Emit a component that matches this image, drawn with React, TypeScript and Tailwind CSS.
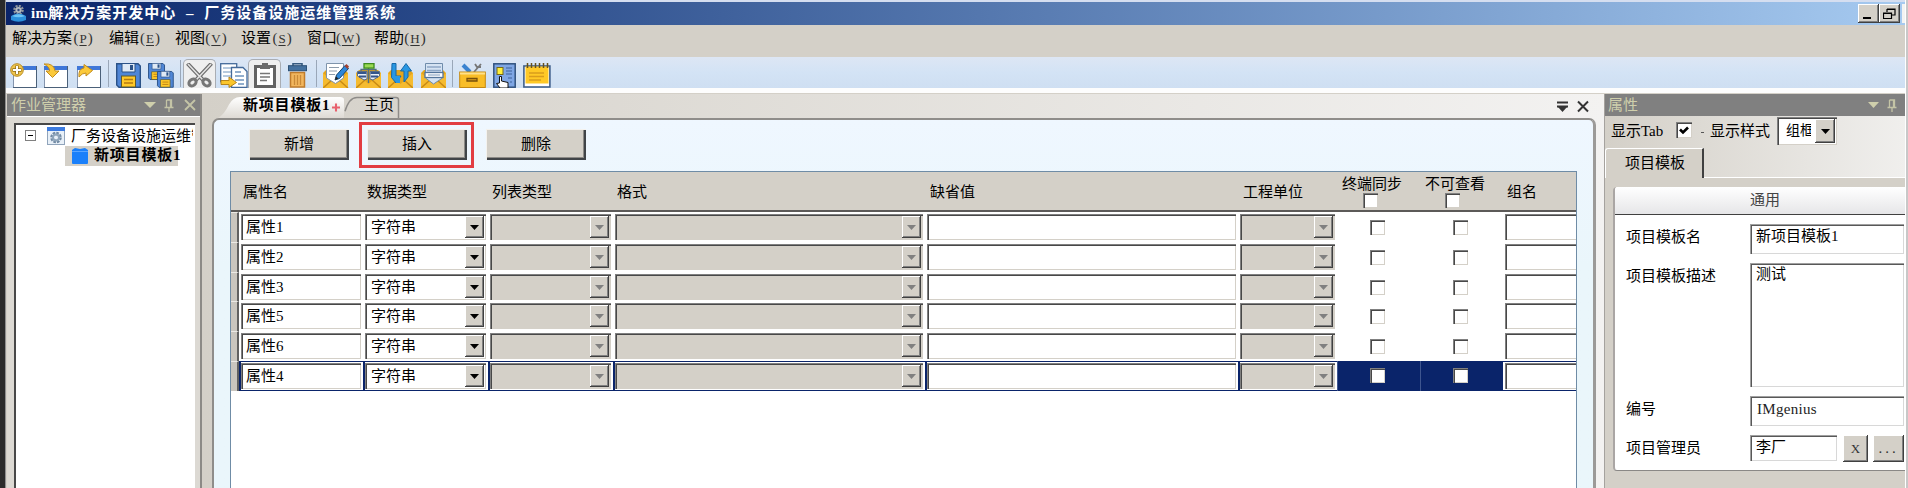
import React from "react";

const FIELD =
  "shadow-[inset_1px_1px_0_#808080,inset_2px_2px_0_#484848,inset_-1px_-1px_0_#d4d0c8]";
const RAISED =
  "bg-[#d4d0c8] shadow-[inset_-1px_-1px_0_#404040,inset_1px_1px_0_#ffffff,inset_-2px_-2px_0_#808080]";

function Icon({ w, h = 25, className = "", children }: { w: number; h?: number; className?: string; children: React.ReactNode }) {
  return (
    <svg width={w} height={h} viewBox={`0 0 ${w} ${h}`} className={`shrink-0 ${className}`}>
      {children}
    </svg>
  );
}

function Arrow({ color = "#000" }: { color?: string }) {
  return (
    <svg width="9" height="5" viewBox="0 0 9 5" className="shrink-0">
      <path d="M0 0H9L4.5 5Z" fill={color} />
    </svg>
  );
}

function Pin() {
  return (
    <svg width="10" height="13" viewBox="0 0 10 13" className="shrink-0">
      <path d="M2.5 1H7.5V8M2.5 1V8M0.5 8.5H9.5M5 8.5V13M6.5 1V8" fill="none" stroke="#c4c4a6" strokeWidth="1.3" />
    </svg>
  );
}

function TitleBar() {
  return (
    <header className="flex h-[23px] shrink-0 items-center bg-linear-to-r from-[#0a246a] to-[#a6caf0] pl-[5px]">
      <Icon w={15} h={17}>
        <circle cx="7.5" cy="5" r="4" fill="none" stroke="#8f969c" strokeWidth="2.6" strokeDasharray="2 1.1" />
        <circle cx="7.5" cy="5" r="3" fill="#b4bac0" />
        <circle cx="7.5" cy="5" r="1.2" fill="#324a7e" />
        <path d="M0 11Q7.500 6 15 11V15Q7.500 18.500 0 15Z" fill="#2b8fdc" />
        <path d="M1 11Q7.500 7.500 14 11Q7.500 13.500 1 11Z" fill="#6ec4f5" />
      </Icon>
      <h1 className="ml-[5px] text-[15px] leading-[23px] font-bold tracking-[1px] whitespace-pre text-white">
        <span className="tracking-[0.3px]">im</span>解决方案开发中心
        <span className="inline-block w-[28px] text-center">–</span>厂务设备设施运维管理系统
      </h1>
      <div className="ml-auto flex h-[19px]">
        <span className={`flex w-[21px] items-end pb-[4px] pl-[5px] ${RAISED}`}>
          <span className="h-[2px] w-[8px] bg-black" />
        </span>
        <span className={`flex w-[21px] items-center justify-center ${RAISED}`}>
          <svg width="13" height="12" viewBox="0 0 13 12">
            <path d="M4 1H12V7H9M4 1V4M0.500 5H8.500V10.500H0.500ZM4 1.500H12M0.500 5.500H8.500" fill="none" stroke="#000" strokeWidth="1.200" />
          </svg>
        </span>
        <span className="ml-[2px] w-[3px] bg-[#f4f4f2]" />
      </div>
    </header>
  );
}

const menus = [
  { label: "解决方案", key: "P", w: "w-[97px]" },
  { label: "编辑", key: "E", w: "w-[66px]" },
  { label: "视图", key: "V", w: "w-[66px]" },
  { label: "设置", key: "S", w: "w-[66px]" },
  { label: "窗口", key: "W", w: "w-[67px]" },
  { label: "帮助", key: "H", w: "w-[67px]" },
];

function MenuBar() {
  return (
    <nav className="flex h-[32px] shrink-0 bg-[#d4d0c8] pt-[2px] pl-[6px]">
      {menus.map((m) => (
        <span key={m.key} className={`flex h-[23px] items-center leading-[23px] ${m.w}`}>
          {m.label}
          <span className="flex w-[22px] items-center justify-center text-[#333]">
            (<u className="mx-px text-[13px] underline-offset-2">{m.key}</u>)
          </span>
        </span>
      ))}
    </nav>
  );
}

function Win() {
  return (
    <>
      <rect x="3.500" y="3.500" width="23" height="21" fill="#fff" stroke="#8494ad" />
      <rect x="3" y="3" width="24" height="4" fill="#3f77d8" />
      <path d="M26.500 3V24.500H3" fill="none" stroke="#4a6079" />
    </>
  );
}

function Floppy() {
  return (
    <>
      <path d="M0.700 0.700H22L24.300 3V24.300H3L0.700 22Z" fill="#4f86d6" stroke="#2b5287" strokeWidth="1.400" />
      <path d="M6 0.500H19V9H6Z" fill="#dfe9f5" stroke="#2b5287" />
      <rect x="14" y="2" width="3" height="5" fill="#2b5287" />
      <rect x="5.500" y="13" width="14" height="11" fill="#ffc928" stroke="#5f5b2c" />
      <path d="M8 16.500H17M8 20H17" stroke="#b47a12" strokeWidth="1.300" />
    </>
  );
}

function Envelope() {
  return (
    <>
      <path d="M0 10L3 7H22L25 10V25H0Z" fill="#e5a51c" />
      <path d="M0 10L12.500 21L25 10V25H0Z" fill="#f5bb30" />
      <path d="M0 25L9 17M25 25L16 17" stroke="#c98b14" strokeWidth="1.500" />
    </>
  );
}

function Sep({ className }: { className: string }) {
  return <span className={`mb-px h-[27px] w-px shrink-0 bg-[#9aa7b8] ${className}`} />;
}

function Toolbar() {
  return (
    <div className="flex h-[31px] shrink-0 items-end bg-linear-to-b from-[#dde6f4] via-[#d3e3f5] to-[#cfdff2]">
      <Icon w={28} className="ml-[4px]">
        <Win />
        <circle cx="7" cy="7" r="6.300" fill="#f0c64c" stroke="#b88b25" />
        <path d="M7 2.500V11.500M2.500 7H11.500" stroke="#8c6a1c" strokeWidth="3.400" />
        <path d="M7 3V11M3 7H11" stroke="#fff" strokeWidth="2" />
      </Icon>
      <Icon w={28} className="ml-[3px]">
        <Win />
        <path d="M3 1Q13 0 14 8H18L11.500 14.500L5 8H8.500Q9 4 3 1Z" fill="#fbc93a" stroke="#c28c1c" />
      </Icon>
      <Icon w={28} className="ml-[5px]">
        <Win />
        <path d="M5 14Q4 6 10 5V1.500L18.500 7.500L12 13V10Q8 10 5 14Z" fill="#fbc93a" stroke="#c28c1c" />
      </Icon>
      <Sep className="ml-[6px]" />
      <Icon w={25} className="ml-[7px]">
        <Floppy />
      </Icon>
      <Icon w={26} className="ml-[7px]">
        <g transform="scale(.68)">
          <Floppy />
        </g>
        <g transform="translate(9 8) scale(.67)">
          <Floppy />
        </g>
      </Icon>
      <Sep className="ml-[6px]" />
      <span className="ml-[2px] flex h-[29px] w-[33px] shrink-0 items-end justify-center rounded-t-[5px] border border-b-0 border-[#a9adb3] bg-[#efefef]">
        <Icon w={27}>
          <path d="M1.500 0.500L18 18M25.500 0.500L9 18" stroke="#6d6d6d" strokeWidth="4" />
          <path d="M2 1L17 17M25 1L10 17" stroke="#e4e4e4" strokeWidth="1.600" />
          <ellipse cx="6.500" cy="19.500" rx="4" ry="3" transform="rotate(-40 6.500 19.500)" fill="#eee" stroke="#777" strokeWidth="3" />
          <ellipse cx="20.500" cy="19.500" rx="4" ry="3" transform="rotate(40 20.500 19.500)" fill="#eee" stroke="#777" strokeWidth="3" />
        </Icon>
      </span>
      <Icon w={28} className="ml-[4px]">
        <rect x="0.700" y="0.700" width="16" height="18" fill="#fff" stroke="#446a9a" strokeWidth="1.300" />
        <path d="M3 5H11M3 9H11M3 13H11" stroke="#6f94bd" />
        <path d="M11.500 4.500H23L27 8.500V24.300H11.500Z" fill="#fff" stroke="#446a9a" strokeWidth="1.300" />
        <path d="M15 9H21M15 13H24M15 17H24M18 21H24" stroke="#6f94bd" strokeWidth="1.300" />
        <path d="M1 17.500H9V14L16.500 19.500L9 24.500V21.500H1Z" fill="#fbc62c" stroke="#b98518" />
      </Icon>
      <span className="flex h-[29px] w-[33px] shrink-0 items-end justify-center rounded-t-[5px] border border-b-0 border-[#a9adb3] bg-[#efefef]">
        <Icon w={22}>
          <rect x="1.500" y="3.500" width="19" height="20" fill="#fff" stroke="#636363" strokeWidth="3" />
          <path d="M6 2H8V0H14V2H16V6H6Z" fill="#6b6b6b" />
          <path d="M6 10.500H16M6 14H16M6 17.500H13" stroke="#777" strokeWidth="1.600" />
        </Icon>
      </span>
      <Icon w={19} className="ml-[7px]">
        <path d="M5 3V0.700H14V3" fill="none" stroke="#365a80" strokeWidth="1.600" />
        <rect x="0.500" y="2.700" width="18" height="5" fill="#44719f" stroke="#2e5378" />
        <path d="M2.500 9.500H16.500V24H2.500Z" fill="#f2b65e" stroke="#c07c2c" strokeWidth="1.500" />
        <path d="M6.500 12V22M9.500 12V22M12.500 12V22" stroke="#c98a38" strokeWidth="1.300" />
      </Icon>
      <Sep className="ml-[9px]" />
      <Icon w={26} className="ml-[6px]">
        <Envelope />
        <path d="M3.500 0.500H20.500V15L12.500 20.500L3.500 15Z" fill="#fff" stroke="#7f94ab" />
        <path d="M6 4.500H16M6 8H14M6 11.500H12" stroke="#8c9bab" />
        <path d="M12 17L13.500 12L22 2.500L25.500 5.500L16.500 15.500Z" fill="#2e86d8" stroke="#17466f" />
        <path d="M21.500 3L23.500 1L26 3.500L24.500 6Z" fill="#a04030" />
        <path d="M12 17L13 13.500L15.500 15.500Z" fill="#222" />
      </Icon>
      <Icon w={25} className="ml-[7px]">
        <Envelope />
        <path d="M12.500 4V20M5 9V6.500H20V9" fill="none" stroke="#54707f" strokeWidth="1.300" />
        <rect x="8" y="0.600" width="10" height="4.500" fill="#9ada54" stroke="#3c8a1c" strokeWidth="1.300" />
        <path d="M1.500 8.500H11V16L8 17L1.500 13Z" fill="#e9eff6" stroke="#5a6d85" />
        <path d="M14 8.500H23.500V13L17 17L14 16Z" fill="#e9eff6" stroke="#5a6d85" />
        <path d="M2 10H10.500M3 13.500H10M14.500 10H23M15 13.500H22" stroke="#34558c" strokeWidth="2" />
      </Icon>
      <Icon w={25} className="ml-[7px]">
        <Envelope />
        <path d="M4 0.500H8V13H13L8 20L3.500 14.500Z" fill="#2a97e2" stroke="#1668a8" />
        <path d="M8 13H12V20H8Z" fill="#2a97e2" />
        <path d="M16 19V8H12.500L18 0.500L23.500 8H20V14Z" fill="#2a97e2" stroke="#1668a8" />
      </Icon>
      <Icon w={25} className="ml-[8px]">
        <Envelope />
        <path d="M4.500 0.500H21.500V15L12.500 21L4.500 15Z" fill="#d5e3f3" stroke="#6f8cab" />
        <path d="M6 4H20M6 7.500H20" stroke="#8ea8c7" strokeWidth="1.400" />
        <rect x="4" y="9.500" width="18" height="5" fill="#fff" stroke="#54759b" strokeWidth="1.300" />
        <path d="M7 12H19" stroke="#7b98ba" />
      </Icon>
      <Sep className="ml-[6px]" />
      <Icon w={27} className="ml-[6px]">
        <path d="M4 2L11 9" stroke="#3b83cf" strokeWidth="4" />
        <path d="M22 1L15 9M16 1L18 4L22 4" fill="none" stroke="#777" strokeWidth="1.800" />
        <rect x="0.700" y="9" width="25.600" height="15.500" fill="#f9bd27" stroke="#c48912" />
        <path d="M1 10.500H26" stroke="#ffe08a" strokeWidth="2" />
        <path d="M8 15.500H18V18H8Z" fill="#e0a01c" stroke="#77500b" strokeWidth="1.300" />
      </Icon>
      <Icon w={23} className="ml-[7px]">
        <rect x="0.800" y="0.800" width="21.400" height="23.400" fill="#7fa6e4" stroke="#31527f" strokeWidth="1.500" />
        <rect x="4" y="4.500" width="6" height="7" fill="#ffef3a" stroke="#776a1a" />
        <path d="M13 5H19M13 8H19M13 11H19M15 15H19M17 19H19" stroke="#3f6399" strokeWidth="1.200" />
        <path d="M6.500 13.500H8.500V18L15 19.500V25H7L3.500 20.500L6.500 20Z" fill="#fff" stroke="#111" />
      </Icon>
      <Icon w={28} className="ml-[7px]">
        <rect x="0.900" y="3" width="26" height="21" fill="#fff" stroke="#3f5f8a" strokeWidth="1.600" />
        <rect x="2.500" y="3.500" width="23" height="17" fill="#ffc926" />
        <path d="M4.500 0V5M8.500 0V5M12.500 0V5M16.500 0V5M20.500 0V5M24.500 0V5" stroke="#66501c" strokeWidth="1.500" />
        <path d="M6 10H21M6 13.500H21M6 17H18" stroke="#d99d1c" strokeWidth="1.300" />
      </Icon>
    </div>
  );
}

function JobPanel() {
  return (
    <aside className="flex w-[196px] shrink-0 flex-col border-r-2 border-r-[#8c8a86] pl-px">
      <div className="flex h-[22px] shrink-0 items-center bg-[#808080] pl-[4px] text-[#cfcfac]">
        <span className="w-[133px] leading-[22px]">作业管理器</span>
        <svg width="12" height="6" viewBox="0 0 12 6"><path d="M0 0H12L6 6Z" fill="#cfcfac" /></svg>
        <span className="ml-[8px] flex"><Pin /></span>
        <svg width="12" height="12" viewBox="0 0 12 12" className="ml-[10px]">
          <path d="M1 1L11 11M11 1L1 11" stroke="#c4c4a6" strokeWidth="1.800" />
        </svg>
      </div>
      <div className="flex flex-1 border-t border-t-white bg-[#dcd9d3] pt-[6px] pr-[5px] pl-[7px]">
        <div className="flex flex-1 flex-col overflow-hidden border-t-2 border-l-2 border-t-[#484848] border-l-[#484848] bg-white">
          <div className="flex h-[21px] shrink-0 items-center pl-[9px]">
            <span className="flex size-[11px] shrink-0 items-center justify-center border border-[#808080]">
              <span className="h-px w-[5px] bg-black" />
            </span>
            <svg width="18" height="18" viewBox="0 0 18 18" className="ml-[11px] shrink-0">
              <rect x="0.500" y="0.500" width="17" height="17" fill="#e8f0f8" stroke="#90a4bb" />
              <rect width="18" height="4" fill="#3c7be0" />
              <circle cx="9" cy="10.500" r="4" fill="none" stroke="#7089a3" strokeWidth="3.600" strokeDasharray="2.200 0.900" />
              <circle cx="9" cy="10.500" r="3" fill="none" stroke="#8fa5ba" strokeWidth="2" />
            </svg>
            <span className="ml-[6px] w-[122px] shrink-0 overflow-hidden leading-[20px] whitespace-nowrap">
              厂务设备设施运维管理系统
            </span>
          </div>
          <div className="ml-[49px] flex h-[20px] w-[113px] shrink-0 items-center bg-[#d4d0c8] pl-[7px]">
            <svg width="16" height="16" viewBox="0 0 16 16" className="shrink-0">
              <path d="M0 2L3 0L8 1L13 0L16 2V15Q16 16 15 16H1Q0 16 0 15Z" fill="#1b80fa" />
              <path d="M0 3.500H16" stroke="#5ba6ff" />
            </svg>
            <span className="ml-[6px] pb-[3px] leading-[18px] font-bold tracking-[0.8px] whitespace-nowrap">新项目模板1</span>
          </div>
        </div>
      </div>
    </aside>
  );
}

function PushButton({ label, className = "" }: { label: string; className?: string }) {
  return (
    <button className={`h-[31px] w-[100px] bg-[#d4d0c8] pb-[2px] leading-[28px] shadow-[inset_1px_1px_0_#f4f2ee,inset_-2px_-2px_0_#404448,inset_-3px_-3px_0_#8c8a86] ${className}`}>
      {label}
    </button>
  );
}

function Combo({ text = "", disabled = false }: { text?: string; disabled?: boolean }) {
  return (
    <div className={`mx-[2px] flex h-[26px] flex-1 items-center p-[2px] pl-[6px] ${FIELD} ${disabled ? "bg-[#d4d0c8]" : "bg-white"}`}>
      <span className="flex-1 leading-[20px]">{text}</span>
      <span className={`flex h-[22px] w-[19px] items-center justify-center ${RAISED}`}>
        <Arrow color={disabled ? "#808080" : "#000"} />
      </span>
    </div>
  );
}

function TextField({ text = "", className = "mx-[2px]" }: { text?: string; className?: string }) {
  return <div className={`flex h-[26px] flex-1 items-center bg-white pb-px pl-[5px] leading-[20px] ${FIELD} ${className}`}>{text}</div>;
}

function Check({ className = "" }: { className?: string }) {
  return <span className={`size-[15px] shrink-0 bg-white ${FIELD} ${className}`} />;
}

const COLS = "grid grid-cols-[124px_125px_125px_312px_313px_99px_83px_83px_73px]";
const rows = [
  { name: "属性1", h: "h-[30px]" },
  { name: "属性2", h: "h-[30px]" },
  { name: "属性3", h: "h-[29px]" },
  { name: "属性5", h: "h-[30px]" },
  { name: "属性6", h: "h-[30px]" },
  { name: "属性4", h: "h-[30px]", selected: true },
];

function DataRow({ name, h, selected = false }: { name: string; h: string; selected?: boolean }) {
  const cell = selected
    ? "flex border-y border-l-2 border-[#0a246a] pt-px"
    : "flex pt-[2px]";
  const inner = selected ? "-ml-[2px] flex flex-1" : "flex flex-1";
  const checkCell = selected
    ? "flex justify-center border-l border-[#3f568f] bg-[#0a246a] pt-[7px]"
    : "flex justify-center pt-[8px]";
  return (
    <div className={`flex ${h}`}>
      <span className="w-[8px] shrink-0 border-t border-r-2 border-t-[#eceae6] border-r-[#606060] bg-[#c9c5be]" />
      <div className={COLS}>
        <div className={cell}><div className={inner}><TextField text={name} /></div></div>
        <div className={cell}><div className={inner}><Combo text="字符串" /></div></div>
        <div className={cell}><div className={inner}><Combo disabled /></div></div>
        <div className={cell}><div className={inner}><Combo disabled /></div></div>
        <div className={cell}><div className={inner}><TextField /></div></div>
        <div className={cell}><div className={inner}><Combo disabled /></div></div>
        <div className={checkCell}><Check className="-ml-[3px]" /></div>
        <div className={checkCell}><Check className="-ml-[3px]" /></div>
        <div className={selected ? "flex border-y border-[#0a246a] pt-px" : "flex pt-[2px]"}>
          <TextField className="ml-[2px] -mr-[2px]" />
        </div>
      </div>
    </div>
  );
}

function DataTable() {
  return (
    <div className="ml-[16px] flex w-[1347px] flex-1 flex-col overflow-hidden border border-b-0 border-[#6f8ca6] bg-white">
      <div className="flex h-[40px] shrink-0 border-b-2 border-b-[#5c5a58] bg-[#d4d0c8] pl-[8px]">
        <div className={COLS}>
          <span className="pl-[4px] leading-[41px]">属性名</span>
          <span className="pl-[4px] leading-[41px]">数据类型</span>
          <span className="pl-[4px] leading-[41px]">列表类型</span>
          <span className="pl-[4px] leading-[41px]">格式</span>
          <span className="pl-[5px] leading-[41px]">缺省值</span>
          <span className="pl-[5px] leading-[41px]">工程单位</span>
          <div className="flex flex-col pt-[3px] pl-[5px]">
            <span className="h-[18px] leading-[19px]">终端同步</span>
            <Check className="ml-[21px]" />
          </div>
          <div className="flex flex-col pt-[3px] pl-[5px]">
            <span className="h-[18px] leading-[19px]">不可查看</span>
            <Check className="ml-[20px]" />
          </div>
          <span className="pl-[4px] leading-[41px]">组名</span>
        </div>
      </div>
      {rows.map((r) => (
        <DataRow key={r.name} {...r} />
      ))}
    </div>
  );
}

function Editor() {
  return (
    <main className="flex min-w-0 flex-1 flex-col bg-linear-to-r from-[#d4d0c8] to-[#f3f2f1] pl-[10px]">
      <div className="flex h-[24px] shrink-0 items-end">
        <div className="relative ml-[6px] flex h-[22px] w-[126px]">
          <svg width="126" height="22" viewBox="0 0 126 23" preserveAspectRatio="none" className="absolute inset-0">
            <defs>
              <linearGradient id="tab" x1="0" y1="0" x2="0" y2="1">
                <stop offset="0" stopColor="#ffffff" />
                <stop offset="1" stopColor="#dedad4" />
              </linearGradient>
            </defs>
            <path d="M0 23Q6 20 11 9Q15 1 22 1H122Q126 1 126 4V23Z" fill="url(#tab)" />
          </svg>
          <span className="relative ml-[25px] leading-[19px] font-bold tracking-[0.8px] whitespace-nowrap">新项目模板1</span>
          <svg width="8" height="9" viewBox="0 0 10 10" className="relative mt-[7px] ml-[2px]">
            <path d="M5 0V10M0 5H10" stroke="#e8606c" strokeWidth="2.600" />
          </svg>
        </div>
        <div className="relative flex h-[22px] w-[56px]">
          <svg width="56" height="22" viewBox="0 0 56 23" preserveAspectRatio="none" className="absolute inset-0">
            <path d="M1 16Q5 1.500 13 1.500H52Q54.500 1.500 54.500 4V23" fill="none" stroke="#8e8c89" strokeWidth="1.500" />
          </svg>
          <span className="relative ml-[20px] leading-[19px]">主页</span>
        </div>
        <svg width="34" height="13" viewBox="0 0 34 13" className="mr-[14px] mb-[5px] ml-auto">
          <path d="M1 2.500H12M1 6.500H12" stroke="#333" strokeWidth="2" />
          <path d="M2 7H11L6.500 12Z" fill="#333" />
          <path d="M22 1.500L32 11.500M32 1.500L22 11.500" stroke="#333" strokeWidth="2" />
        </svg>
      </div>
      <div className="mr-[8px] flex flex-1 flex-col rounded-t-[7px] border-t-2 border-r-3 border-l-2 border-t-[#8f8d8a] border-r-[#9c9a98] border-l-[#8f8d8a] bg-linear-to-b from-[#eff7ff] to-[#eaf6fb] to-40%">
        <div className="flex h-[51px] shrink-0 items-start pt-[2px] pl-[35px]">
          <PushButton label="新增" className="mt-[7px]" />
          <span className="ml-[10px] flex h-[46px] w-[115px] items-start border-3 border-[#e23d42] pt-[4px] pl-[5px]">
            <PushButton label="插入" />
          </span>
          <PushButton label="删除" className="mt-[7px] ml-[12px]" />
        </div>
        <DataTable />
      </div>
    </main>
  );
}

const BOX = "shadow-[inset_1px_1px_0_#a0a0a0,inset_2px_2px_0_#585858,inset_-1px_-1px_0_#d8d8d8]";

function Properties() {
  return (
    <aside className="flex w-[301px] shrink-0 flex-col overflow-hidden border-l border-l-[#a5a29e] bg-[#d4d0c8]">
      <div className="flex h-[22px] shrink-0 items-center bg-[#808080] pl-[3px] text-[#cfcfac]">
        <span className="w-[260px] leading-[22px]">属性</span>
        <svg width="11" height="6" viewBox="0 0 11 6"><path d="M0 0H11L5.500 6Z" fill="#cfcfac" /></svg>
        <span className="ml-[8px] flex"><Pin /></span>
      </div>
      <div className="flex h-[62px] shrink-0 flex-col bg-linear-to-r from-[#d4d0c8] to-[#f0efed]">
        <div className="flex h-[32px] items-center pl-[6px]">
          <span className="w-[65px] pb-[3px] leading-[22px]">显示Tab</span>
          <span className={`mb-[4px] flex size-[16px] items-center justify-center bg-white ${FIELD}`}>
            <svg width="10" height="9" viewBox="0 0 10 9">
              <path d="M1 3.500L4 6.500L9 1.500" fill="none" stroke="#000" strokeWidth="2.600" />
            </svg>
          </span>
          <span className="ml-[9px] h-px w-[3px] bg-[#555]" />
          <span className="ml-[6px] w-[67px] pb-[3px] leading-[22px]">显示样式</span>
          <div className={`mt-[-2px] flex h-[28px] w-[60px] items-center bg-white p-[2px] pl-[9px] ${FIELD}`}>
            <span className="w-[25px] overflow-hidden text-[14px] leading-[20px] whitespace-nowrap">组框</span>
            <span className={`ml-auto flex h-[24px] w-[20px] items-center justify-center ${RAISED}`}><Arrow /></span>
          </div>
        </div>
        <div className="flex flex-1">
          <span className="w-[99px] rounded-tl-[3px] border-t border-r-2 border-l border-t-white border-r-[#404040] border-l-white bg-[#d4d0c8] pl-[19px] leading-[28px]">项目模板</span>
          <span className="flex-1 border-b border-b-white" />
        </div>
      </div>
      <section className="mt-[9px] ml-[8px] flex h-[284px] w-[292px] shrink-0 flex-col rounded-l-[4px] border-b border-l-2 border-b-[#8a8886] border-l-[#aaa6a4] bg-white">
        <h2 className="h-[28px] shrink-0 rounded-tl-[3px] border-b border-b-[#404040] bg-linear-to-b from-white to-[#e6e6e8] pl-[135px] leading-[27px] text-[#444]">通用</h2>
        <div className="grid grid-cols-[124px_154px] gap-y-[9px] pt-[9px] pl-[11px]">
          <span className="leading-[26px]">项目模板名</span>
          <div className={`h-[30px] pl-[6px] leading-[24px] ${BOX}`}>新项目模板1</div>
          <span className="leading-[26px]">项目模板描述</span>
          <div className={`h-[124px] pl-[6px] leading-[23px] ${BOX}`}>测试</div>
          <span className="leading-[26px]">编号</span>
          <div className={`h-[30px] pl-[7px] leading-[26px] tracking-[0.3px] text-[#222] ${BOX}`}>IMgenius</div>
          <span className="leading-[26px]">项目管理员</span>
          <div className="flex">
            <div className={`h-[26px] w-[88px] pl-[6px] leading-[25px] ${BOX}`}>李厂</div>
            <button className={`ml-[6px] h-[27px] w-[25px] shrink-0 text-[13px] text-[#333] ${RAISED}`}>X</button>
            <button className={`ml-[5px] h-[27px] w-[31px] shrink-0 tracking-[3px] text-[#333] ${RAISED}`}>...</button>
          </div>
        </div>
      </section>
    </aside>
  );
}

export default function App() {
  return (
    <div className="flex h-[488px] w-[1908px] overflow-hidden bg-[#d4d0c8] font-['Liberation_Serif','Noto_Sans_CJK_SC',sans-serif] text-[15px] text-black">
      <div className="w-[6px] shrink-0 border-r border-r-[#8f8f8f] bg-[#2b2b2b]" />
      <div className="flex w-[1899px] shrink-0 flex-col">
        <div className="h-[2px] shrink-0 bg-[#d5def0]" />
        <TitleBar />
        <MenuBar />
        <Toolbar />
        <div className="h-[5px] shrink-0 bg-[#fdfdfd]" />
        <div className="flex min-h-0 flex-1 pt-px">
          <JobPanel />
          <Editor />
          <Properties />
        </div>
      </div>
      <div className="flex-1 border-l border-l-white bg-[#c8c8c8]" />
    </div>
  );
}
